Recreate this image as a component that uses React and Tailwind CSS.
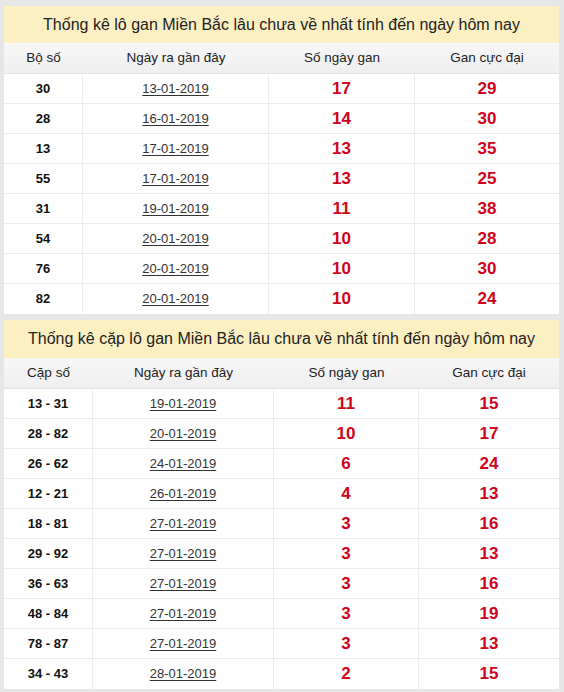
import React from 'react';

const loGan = [
  ['30', '13-01-2019', 17, 29],
  ['28', '16-01-2019', 14, 30],
  ['13', '17-01-2019', 13, 35],
  ['55', '17-01-2019', 13, 25],
  ['31', '19-01-2019', 11, 38],
  ['54', '20-01-2019', 10, 28],
  ['76', '20-01-2019', 10, 30],
  ['82', '20-01-2019', 10, 24],
];

const capLoGan = [
  ['13 - 31', '19-01-2019', 11, 15],
  ['28 - 82', '20-01-2019', 10, 17],
  ['26 - 62', '24-01-2019', 6, 24],
  ['12 - 21', '26-01-2019', 4, 13],
  ['18 - 81', '27-01-2019', 3, 16],
  ['29 - 92', '27-01-2019', 3, 13],
  ['36 - 63', '27-01-2019', 3, 16],
  ['48 - 84', '27-01-2019', 3, 19],
  ['78 - 87', '27-01-2019', 3, 13],
  ['34 - 43', '28-01-2019', 2, 15],
];

// bảng thống kê, cols = độ rộng từng cột
const GanTable = ({ title, firstCol, rows, cols, titleH }) => (
  <div className="bg-white">
    <div className={`${titleH} flex items-center justify-center bg-[#fcf0c3] text-[16px] text-[#222]`}>
      {title}
    </div>
    <div
      className="grid h-[31px] items-center bg-gradient-to-b from-[#f7f7f7] to-[#efefef] text-[13.5px] text-[#222] border-b border-[#e4e4e4]"
      style={{ gridTemplateColumns: cols }}
    >
      <div className="text-center">{firstCol}</div>
      <div className="text-center">Ngày ra gần đây</div>
      <div className="text-center">Số ngày gan</div>
      <div className="text-center">Gan cực đại</div>
    </div>
    {rows.map((r, i) => (
      <div
        key={i}
        className="grid h-[30px] items-stretch border-b border-[#ececec] last:border-b-0"
        style={{ gridTemplateColumns: cols }}
      >
        <div className="flex items-center justify-center border-r border-[#ececec] text-[13px] font-bold text-[#111]">
          {r[0]}
        </div>
        <div className="flex items-center justify-center border-r border-[#ececec] text-[13px] text-[#333] underline underline-offset-2">
          {r[1]}
        </div>
        <div className="flex items-center justify-center border-r border-[#ececec] text-[17px] font-bold text-[#d0021b]">
          {r[2]}
        </div>
        <div className="flex items-center justify-center text-[17px] font-bold text-[#d0021b]">
          {r[3]}
        </div>
      </div>
    ))}
  </div>
);

export default function App() {
  return (
    <div
      className="w-[564px] h-[692px] bg-[#e6e6e6] pl-[4px] pr-[5px] pt-[6px] flex flex-col gap-[6px] overflow-hidden"
      style={{ fontFamily: '"Liberation Sans", Arial, sans-serif' }}
    >
      <GanTable
        title="Thống kê lô gan Miền Bắc lâu chưa về nhất tính đến ngày hôm nay"
        firstCol="Bộ số"
        rows={loGan}
        cols="79px 186px 146px 1fr"
        titleH="h-[37px]"
      />
      <GanTable
        title="Thống kê cặp lô gan Miền Bắc lâu chưa về nhất tính đến ngày hôm nay"
        firstCol="Cặp số"
        rows={capLoGan}
        cols="89px 181px 145px 1fr"
        titleH="h-[38px]"
      />
    </div>
  );
}
